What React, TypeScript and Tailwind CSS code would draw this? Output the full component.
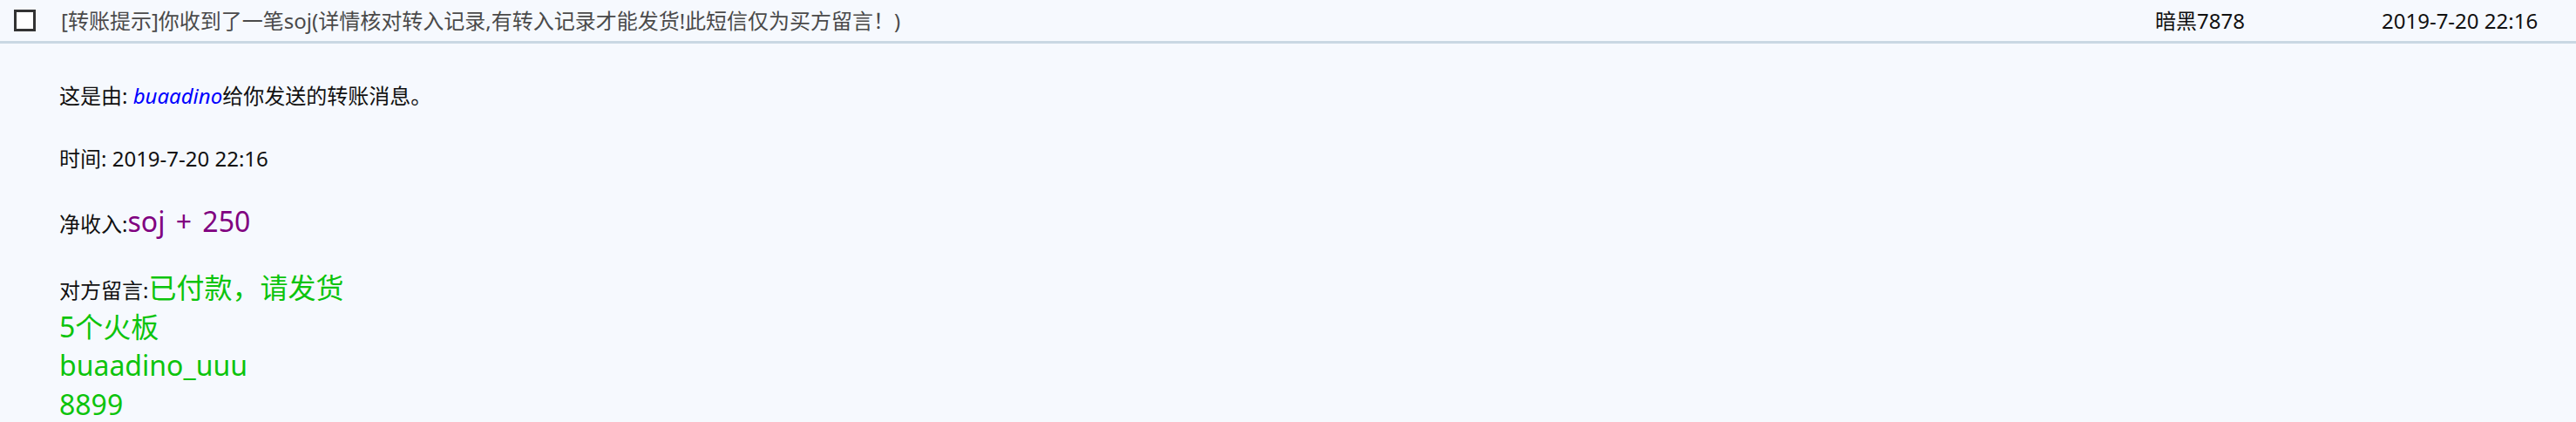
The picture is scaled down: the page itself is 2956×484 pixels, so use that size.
import React from "react";

const font = { fontFamily: '"Noto Sans", "Noto Sans CJK SC", sans-serif' };

export default function App() {
  return (
    <div
      className="w-[2956px] h-[484px] bg-[#f6f9fe] text-[24px] text-[#111] overflow-hidden"
      style={font}
    >
      <div className="flex items-center h-[50px] border-b-[3px] border-[#c9d8e3]">
        <div className="w-[70px] flex items-center pl-[16px]">
          <div className="w-[25px] h-[25px] border-[3px] border-[#333] bg-white" />
        </div>
        <div className="flex-1 text-[#4a4a4a] whitespace-nowrap leading-[36px]">
          [转账提示]你收到了一笔soj(详情核对转入记录,有转入记录才能发货!此短信仅为买方留言！)
        </div>
        <div className="w-[260px] leading-[36px]">暗黑7878</div>
        <div className="w-[223px] leading-[36px]">2019-7-20 22:16</div>
      </div>
      <div className="pl-[68px] pt-[42px]">
        <p className="leading-[36px]">
          这是由: <i className="text-[#0000ff]">buaadino</i>给你发送的转账消息。
        </p>
        <p className="leading-[36px] mt-[36px]">时间: 2019-7-20 22:16</p>
        <p className="leading-[40px] mt-[34px]">
          净收入:<span className="text-[32px] text-[#800080] [word-spacing:4px]">soj + 250</span>
        </p>
        <p className="leading-[41.5px] mt-[32px]">
          对方留言:
          <span className="text-[32px] text-[#0cc40c]">
            已付款，请发货
            <br />
            5个火板
            <br />
            buaadino_uuu
            <br />
            8899
          </span>
        </p>
      </div>
    </div>
  );
}
